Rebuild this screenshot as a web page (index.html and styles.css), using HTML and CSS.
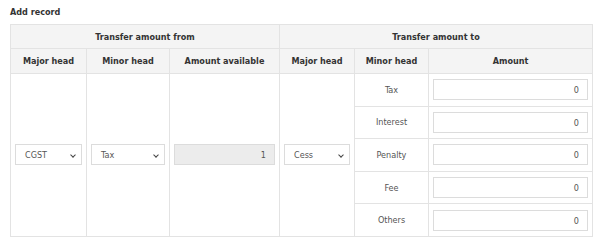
FILE: index.html
```html
<!DOCTYPE html>
<html>
<head>
<meta charset="utf-8">
<link rel="stylesheet" href="styles.css">
</head>
<body>
<div class="title">Add record</div>
<table class="grid">
  <colgroup>
    <col class="c1"><col class="c2"><col class="c3"><col class="c4"><col class="c5"><col class="c6">
  </colgroup>
  <thead>
    <tr class="h1"><th colspan="3">Transfer amount from</th><th colspan="3">Transfer amount to</th></tr>
    <tr class="h2"><th>Major head</th><th>Minor head</th><th>Amount available</th><th>Major head</th><th>Minor head</th><th>Amount</th></tr>
  </thead>
  <tbody>
    <tr>
      <td rowspan="5"><div class="sel">CGST<span class="chev"></span></div></td>
      <td rowspan="5"><div class="sel">Tax<span class="chev"></span></div></td>
      <td rowspan="5"><div class="inp ro">1</div></td>
      <td rowspan="5"><div class="sel">Cess<span class="chev"></span></div></td>
      <td class="lbl">Tax</td>
      <td><div class="inp">0</div></td>
    </tr>
    <tr><td class="lbl">Interest</td><td><div class="inp">0</div></td></tr>
    <tr><td class="lbl">Penalty</td><td><div class="inp">0</div></td></tr>
    <tr><td class="lbl">Fee</td><td><div class="inp">0</div></td></tr>
    <tr><td class="lbl">Others</td><td><div class="inp">0</div></td></tr>
  </tbody>
</table>
</body>
</html>
```
FILE: styles.css
```css
body {
  margin: 0;
  padding: 6px 0 0 10px;
  font-family: "DejaVu Sans Condensed", "DejaVu Sans", Verdana, sans-serif;
  font-size: 9px;
  color: #333;
  background: #fff;
}
.title {
  font-weight: bold;
  height: 18px;
  line-height: 12px;
}
.grid {
  border-collapse: collapse;
  table-layout: fixed;
  width: 582px;
}
.c1 { width: 76px; }
.c2 { width: 83px; }
.c3 { width: 110px; }
.c4 { width: 75px; }
.c5 { width: 74px; }
.c6 { width: 164px; }
.grid th, .grid td {
  border: 1px solid #e3e3e3;
  padding: 0 4px;
  text-align: center;
}
.grid th {
  background: #f4f4f4;
  font-weight: bold;
  color: #333;
}
.h1 th { height: 23px; }
.h2 th { height: 24px; }
.grid tbody td { height: 31.6px; }
.lbl { color: #555; }
.sel {
  position: relative;
  height: 21px;
  line-height: 21px;
  border: 1px solid #dcdcdc;
  background: #fff;
  text-align: left;
  padding-left: 9px;
  color: #555;
  box-sizing: border-box;
}
.chev {
  position: absolute;
  right: 6px;
  top: 8px;
  width: 3px;
  height: 3px;
  border-right: 1.5px solid #444;
  border-bottom: 1.5px solid #444;
  transform: rotate(45deg);
}
.inp {
  height: 21px;
  line-height: 21px;
  border: 1px solid #dcdcdc;
  background: #fff;
  text-align: right;
  padding-right: 8px;
  color: #555;
  box-sizing: border-box;
}
.inp.ro { background: #ececec; }
```
